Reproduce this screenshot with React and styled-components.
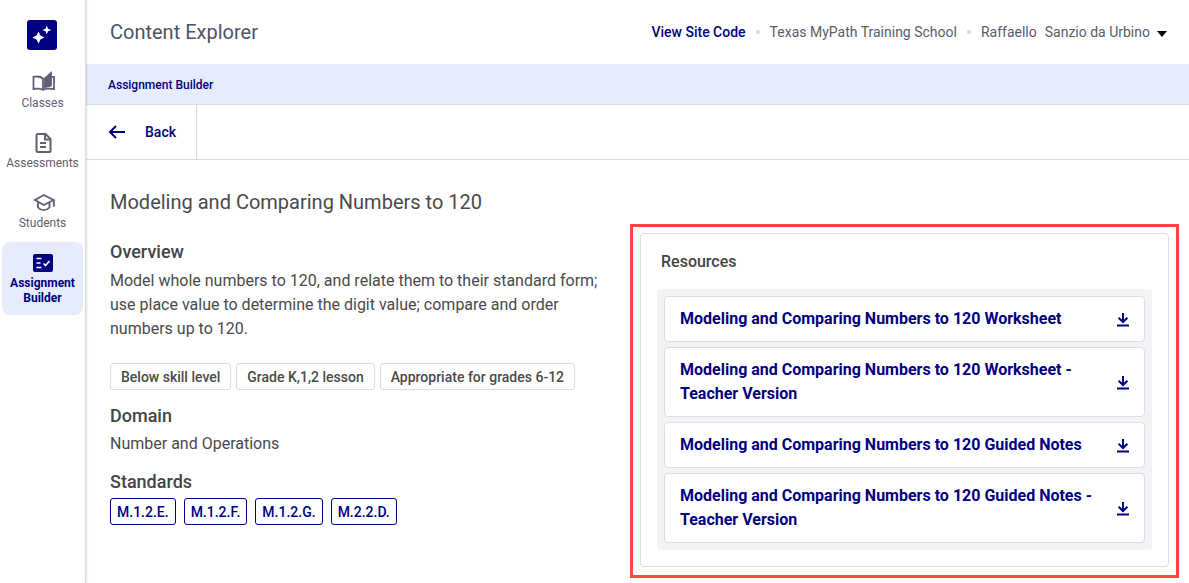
import React from "react";
import styled, { createGlobalStyle } from "styled-components";

const Global = createGlobalStyle`
  html, body { margin: 0; padding: 0; background: #fff; }
  body { font-family: Roboto, "Liberation Sans", sans-serif; color: #444; }
  #root { height: 583px; overflow: hidden; }
`;
const Shell = styled.div`display: flex; height: 583px; width: 1189px; overflow: hidden;`;
const Sidebar = styled.nav`
  width: 86px; flex: none; display: flex; flex-direction: column; align-items: center;
  padding-top: 20px; box-sizing: border-box; background: #fff;
  border-right: 1px solid #dcdcdf; box-shadow: 1px 0 2px rgba(0,0,0,.12); position: relative; z-index: 1;
`;
const Logo = styled.div`
  width: 30px; height: 30px; border-radius: 3px; background: #000080; display: flex;
  align-items: center; justify-content: center; margin: 0 1px 20px 0;
`;
const NavItem = styled.div`
  width: 81px; height: ${p => p.$active ? "73px" : "60px"}; box-sizing: border-box;
  margin-top: ${p => p.$active ? "-8px" : "0"}; display: flex; flex-direction: column; align-items: center;
  background: ${p => p.$active ? "#e6ecfc" : "transparent"}; border-radius: 8px;
  padding-top: ${p => p.$active ? "12px" : "2px"};
  font-size: 12px; line-height: ${p => p.$active ? "15px" : "14px"};
  font-weight: ${p => p.$active ? 700 : 400}; color: ${p => p.$active ? "#000080" : "#5f6070"};
  text-align: center;
  svg { display: block; overflow: visible; margin-bottom: 4px; }
`;
const Main = styled.div`flex: 1; min-width: 0; display: flex; flex-direction: column;`;
const TopBar = styled.header`
  height: 64px; flex: none; display: flex; align-items: center; justify-content: space-between;
  padding: 0 21px 0 24px; box-sizing: border-box;
`;
const PageTitle = styled.h1`margin: 0; font-size: 20px; font-weight: 400; color: #50525f;`;
const Meta = styled.div`display: flex; align-items: center; font-size: 14px; color: #5a5c68;`;
const SiteCode = styled.a`color: #000080; font-weight: 500;`;
const Dot = styled.span`width: 4px; height: 4px; border-radius: 50%; background: #d5d5d8; margin: 0 10px;`;
const UserName = styled.span`display: flex; gap: 8px;`;
const Caret = styled.span`
  width: 0; height: 0; border-left: 5.500px solid transparent; border-right: 5.500px solid transparent;
  border-top: 6px solid #000; margin-left: 7px; margin-right: 1px; margin-top: 3px;
`;
const Crumb = styled.div`
  height: 41px; flex: none; box-sizing: border-box; background: #e6ecfc; border-bottom: 1px solid #dcdde3;
  display: flex; align-items: center; padding: 2px 0 0 22px; font-size: 12px; font-weight: 500; color: #000080;
`;
const BackRow = styled.div`height: 55px; flex: none; box-sizing: border-box; border-bottom: 1px solid #dcdcdf; display: flex;`;
const BackButton = styled.div`
  width: 111px; box-sizing: border-box; border-right: 1px solid #dcdcdf; display: flex; align-items: center;
  padding-left: 22px; gap: 19px; font-size: 14px; font-weight: 500; color: #000080;
`;
const Content = styled.div`flex: 1; display: flex; min-height: 0;`;
const Left = styled.section`width: 544px; flex: none; box-sizing: border-box; padding: 30px 0 0 24px;`;
const Heading = styled.h2`margin: 0 0 26px; font-size: 20px; line-height: 24px; font-weight: 400; color: #4a4a4a;`;
const SubHeading = styled.h3`
  margin: ${p => p.$top || "0"} 0 ${p => p.$bottom || "4px"}; font-size: 18px; line-height: 24px; font-weight: 500; color: #444;
`;
const Body = styled.p`margin: 0; font-size: 16px; line-height: 24px; color: #4a4a4a; width: 490px;`;
const Chips = styled.div`display: flex; gap: 5px; margin: 22px 0 14px;`;
const Chip = styled.span`
  height: 27px; box-sizing: border-box; display: flex; align-items: center; padding: 0 10px;
  border: 1px solid #dcdcdf; border-radius: 3px; font-size: 14px; color: #4a4a4a; font-weight: 500;
`;
const Standards = styled.div`display: flex; gap: 8px; margin-top: 4px;`;
const Standard = styled.span`
  height: 27px; box-sizing: border-box; display: flex; align-items: center; padding: 0 6px;
  border: 1px solid #000080; border-radius: 3px; font-size: 14px; font-weight: 500; color: #000080;
`;
const Highlight = styled.div`
  margin-top: 64px; width: 549px; height: 354px; box-sizing: border-box;
  border: 3px solid #ff4444; padding: 6px 7px 8px 7px;
`;
const Card = styled.div`
  height: 100%; box-sizing: border-box; border: 1px solid #dcdcdf; border-radius: 4px; padding: 16px;
`;
const CardTitle = styled.h3`margin: 0 0 16px 4px; font-size: 16px; line-height: 23px; font-weight: 500; color: #444;`;
const List = styled.div`
  background: #f3f3f6; border-radius: 4px; padding: 7px; display: flex; flex-direction: column; gap: 5px;
`;
const Row = styled.div`
  min-height: 46px; box-sizing: border-box; background: #fff; border: 1px solid #dcdce3; border-radius: 4px;
  display: flex; align-items: center; justify-content: space-between; padding: 10px 14px 10px 15px;
`;
const RowText = styled.span`
  font-size: 16px; line-height: 24px; font-weight: 700; color: #000080; max-width: 420px;
`;

const Download = () => (
  <svg width="14" height="15" viewBox="0 0 14 15" fill="none" stroke="#000080" strokeWidth="2">
    <path d="M7 1v8.500M2.600 5.800 7 10l4.400-4.200" />
    <path d="M1 13.500h12" />
  </svg>
);
const resources = [
  "Modeling and Comparing Numbers to 120 Worksheet",
  "Modeling and Comparing Numbers to 120 Worksheet - Teacher Version",
  "Modeling and Comparing Numbers to 120 Guided Notes",
  "Modeling and Comparing Numbers to 120 Guided Notes - Teacher Version",
];

export default function App() {
  return (
    <Shell>
      <Global />
      <Sidebar>
        <Logo>
          <svg width="22" height="22" viewBox="0 0 22 22" fill="#fff">
            <path d="M7.500 7.500 9.500 11.500l4 2-4 2-2 4-2-4-4-2 4-2z" />
            <path d="M15.800 1.500 17 4.800 20.300 6 17 7.200 15.800 10.500 14.600 7.200 11.300 6l3.300-1.200z" />
          </svg>
        </Logo>
        <NavItem>
          <svg width="24" height="20" viewBox="0 0 24 20" fill="none" stroke="#5f6070" strokeWidth="1.800">
            <path d="M12 17.800C10 16.800 6 16.300 2.500 17V4.800C6 4.200 10 4.700 12 6.500zM12 17.800C14 16.800 18.500 16.300 23 17V4.800h-2" />
            <path d="M14 15V6.500L20 1v12.500z" fill="#5f6070" />
          </svg>
          Classes
        </NavItem>
        <NavItem>
          <svg width="18" height="20" viewBox="0 0 18 20" fill="none" stroke="#5f6070" strokeWidth="2">
            <path d="M4 2h7.500l5 5v12.500a.9.9 0 0 1-1 .5h-11.500a1.500 1.500 0 0 1-1.500-1.500V3.500A1.500 1.500 0 0 1 4 2z" />
            <path d="M11 2v5.500h5.500M6 11h6M6 15h6" />
          </svg>
          Assessments
        </NavItem>
        <NavItem>
          <svg width="24" height="20" viewBox="0 0 24 20" fill="none" stroke="#5f6070" strokeWidth="1.900">
            <path d="M12.800 3 4 8l8.800 5 9.700-5z" />
            <path d="M7 10.500v5c3 3.500 8.500 3.500 11.500 0v-5M22.800 8v6.500" />
          </svg>
          Students
        </NavItem>
        <NavItem $active>
          <svg width="20" height="18" viewBox="0 0 20 18">
            <rect width="20" height="18" rx="2" fill="#000080" />
            <path d="M3.500 4.500h5M3.500 9h4M3.500 13.500h5" stroke="#fff" strokeWidth="1.600" />
            <path d="m10.500 9.500 2 2 4-4.500" stroke="#fff" strokeWidth="1.600" fill="none" />
          </svg>
          Assignment<br />Builder
        </NavItem>
      </Sidebar>
      <Main>
        <TopBar>
          <PageTitle>Content Explorer</PageTitle>
          <Meta>
            <SiteCode>View Site Code</SiteCode>
            <Dot />
            <span>Texas MyPath Training School</span>
            <Dot />
            <UserName><span>Raffaello</span><span>Sanzio da Urbino</span></UserName>
            <Caret />
          </Meta>
        </TopBar>
        <Crumb>Assignment Builder</Crumb>
        <BackRow>
          <BackButton>
            <svg width="18" height="14" viewBox="0 0 18 14" fill="none" stroke="#000080" strokeWidth="2">
              <path d="M17 7H2M8 1 2 7l6 6" />
            </svg>
            Back
          </BackButton>
        </BackRow>
        <Content>
          <Left>
            <Heading>Modeling and Comparing Numbers to 120</Heading>
            <SubHeading $bottom="5px">Overview</SubHeading>
            <Body>Model whole numbers to 120, and relate them to their standard form; use place value to determine the digit value; compare and order numbers up to 120.</Body>
            <Chips>
              <Chip>Below skill level</Chip>
              <Chip>Grade K,1,2 lesson</Chip>
              <Chip>Appropriate for grades 6-12</Chip>
            </Chips>
            <SubHeading>Domain</SubHeading>
            <Body>Number and Operations</Body>
            <SubHeading $top="14px" $bottom="3px">Standards</SubHeading>
            <Standards>
              <Standard>M.1.2.E.</Standard>
              <Standard>M.1.2.F.</Standard>
              <Standard>M.1.2.G.</Standard>
              <Standard>M.2.2.D.</Standard>
            </Standards>
          </Left>
          <Highlight>
            <Card>
              <CardTitle>Resources</CardTitle>
              <List>
                {resources.map(r => (
                  <Row key={r}>
                    <RowText>{r}</RowText>
                    <Download />
                  </Row>
                ))}
              </List>
            </Card>
          </Highlight>
        </Content>
      </Main>
    </Shell>
  );
}
